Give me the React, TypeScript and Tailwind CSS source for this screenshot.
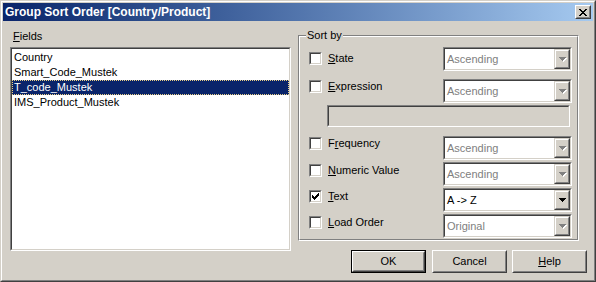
import type { ReactNode } from "react";

const fields = ["Country", "Smart_Code_Mustek", "T_code_Mustek", "IMS_Product_Mustek"];

const Sunken = ({
  className = "",
  inner = "",
  children,
}: {
  className?: string;
  inner?: string;
  children?: ReactNode;
}) => (
  <div className={`border border-t-[#808080] border-l-[#808080] border-b-white border-r-white ${className}`}>
    <div
      className={`h-full w-full border border-t-[#404040] border-l-[#404040] border-b-[#d4d0c8] border-r-[#d4d0c8] ${inner}`}
    >
      {children}
    </div>
  </div>
);

const Raised = ({
  className = "",
  inner = "",
  children,
}: {
  className?: string;
  inner?: string;
  children?: ReactNode;
}) => (
  <div className={`border border-t-[#d4d0c8] border-l-[#d4d0c8] border-b-[#404040] border-r-[#404040] ${className}`}>
    <div
      className={`h-full w-full border border-t-white border-l-white border-b-[#808080] border-r-[#808080] bg-[#d4d0c8] ${inner}`}
    >
      {children}
    </div>
  </div>
);

const Check = ({ checked = false }: { checked?: boolean }) => (
  <Sunken className="w-[13px] h-[13px] shrink-0" inner="bg-white">
    {checked && (
      <svg width="9" height="9" viewBox="0 0 9 9" shapeRendering="crispEdges" className="block">
        <g fill="#000">
          <rect x="1" y="3" width="1" height="3" />
          <rect x="2" y="4" width="1" height="3" />
          <rect x="3" y="5" width="1" height="3" />
          <rect x="4" y="4" width="1" height="3" />
          <rect x="5" y="3" width="1" height="3" />
          <rect x="6" y="2" width="1" height="3" />
          <rect x="7" y="1" width="1" height="3" />
        </g>
      </svg>
    )}
  </Sunken>
);

const Arrow = ({ enabled }: { enabled: boolean }) => (
  <svg width="8" height="5" viewBox="0 0 8 5" shapeRendering="crispEdges" className="block">
    {!enabled && (
      <g fill="#fff">
        <rect x="1" y="1" width="7" height="1" />
        <rect x="2" y="2" width="5" height="1" />
        <rect x="3" y="3" width="3" height="1" />
        <rect x="4" y="4" width="1" height="1" />
      </g>
    )}
    <g fill={enabled ? "#000" : "#808080"}>
      <rect x="0" y="0" width="7" height="1" />
      <rect x="1" y="1" width="5" height="1" />
      <rect x="2" y="2" width="3" height="1" />
      <rect x="3" y="3" width="1" height="1" />
    </g>
  </svg>
);

const Combo = ({ value, enabled = false }: { value: string; enabled?: boolean }) => (
  <Sunken className="w-[129px] h-[24px] shrink-0" inner="bg-white flex items-center">
    <span className={`flex-1 pl-[2px] ${enabled ? "text-black" : "text-[#808080]"}`}>{value}</span>
    <Raised className="w-[16px] h-full" inner="flex items-center justify-center pl-[1px]">
      <Arrow enabled={enabled} />
    </Raised>
  </Sunken>
);

const Row = ({
  label,
  value,
  off,
  checked = false,
  enabled = false,
  className = "",
}: {
  label: ReactNode;
  value: string;
  off: string;
  checked?: boolean;
  enabled?: boolean;
  className?: string;
}) => (
  <div className={`flex items-start h-[24px] ${className}`}>
    <div className={`w-[143px] pl-[9px] flex items-center gap-[6px] ${off}`}>
      <Check checked={checked} />
      <span className="leading-[13px]">{label}</span>
    </div>
    <Combo value={value} enabled={enabled} />
  </div>
);

const TitleBar = () => (
  <div className="h-[18px] shrink-0 flex items-center justify-between bg-linear-to-r from-[#0a246a] to-[#a6caf0] pl-[2px] pr-[2px]">
    <span className="font-bold text-white text-[12px] leading-[14px]">Group Sort Order [Country/Product]</span>
    <div className="border border-t-white border-l-white border-b-[#404040] border-r-[#404040] w-[16px] h-[14px]">
      <div className="h-full w-full border border-t-[#d4d0c8] border-l-[#d4d0c8] border-b-[#808080] border-r-[#808080] bg-[#d4d0c8] flex items-center justify-center">
        <svg width="8" height="7" viewBox="0 0 8 7" shapeRendering="crispEdges" className="block">
          <g fill="#000">
            <rect x="0" y="0" width="2" height="1" />
            <rect x="6" y="0" width="2" height="1" />
            <rect x="1" y="1" width="2" height="1" />
            <rect x="5" y="1" width="2" height="1" />
            <rect x="2" y="2" width="4" height="1" />
            <rect x="3" y="3" width="2" height="1" />
            <rect x="2" y="4" width="4" height="1" />
            <rect x="1" y="5" width="2" height="1" />
            <rect x="5" y="5" width="2" height="1" />
            <rect x="0" y="6" width="2" height="1" />
            <rect x="6" y="6" width="2" height="1" />
          </g>
        </svg>
      </div>
    </div>
  </div>
);

const Btn = ({ children, def = false, className = "" }: { children: ReactNode; def?: boolean; className?: string }) =>
  def ? (
    <div className={`w-[75px] h-[23px] border border-black ${className}`}>
      <div className="h-full w-full border border-t-white border-l-white border-b-[#404040] border-r-[#404040] bg-[#d4d0c8]">
        <div className="h-full w-full border border-t-[#d4d0c8] border-l-[#d4d0c8] border-b-[#808080] border-r-[#808080] flex items-center justify-center">
          {children}
        </div>
      </div>
    </div>
  ) : (
    <div
      className={`w-[75px] h-[23px] border border-t-white border-l-white border-b-[#404040] border-r-[#404040] ${className}`}
    >
      <div className="h-full w-full border border-t-[#d4d0c8] border-l-[#d4d0c8] border-b-[#808080] border-r-[#808080] bg-[#d4d0c8] flex items-center justify-center">
        {children}
      </div>
    </div>
  );

export default function App() {
  return (
    <div className="w-[596px] h-[282px] border border-t-[#d4d0c8] border-l-[#d4d0c8] border-b-[#404040] border-r-[#404040] bg-[#d4d0c8] font-['Liberation_Sans',Arial,sans-serif] text-[11px] leading-[13px] text-black select-none">
      <div className="h-full border border-t-white border-l-white border-b-[#808080] border-r-[#808080] p-[1px] flex flex-col">
        <TitleBar />
        <div className="flex flex-1 pl-[7px]">
          {/* fields list */}
          <div className="w-[281px] flex flex-col">
            <div className="mt-[9px] pl-[3px]">
              <u>F</u>ields
            </div>
            <Sunken className="mt-[4px] w-[281px] h-[204px]" inner="bg-white pt-[1px]">
              {fields.map((f, i) => (
                <div
                  key={f}
                  className={`h-[15px] pl-[1px] border flex items-center ${
                    i === 2
                      ? "bg-[#0a246a] text-white border-dotted border-[#e9cf86]"
                      : "border-transparent"
                  }`}
                >
                  {f}
                </div>
              ))}
            </Sunken>
          </div>

          {/* sort by + buttons */}
          <div className="ml-[7px] w-[289px] flex flex-col">
            <div className="relative mt-[14px] w-[281px] h-[206px] border border-t-[#808080] border-l-[#808080] border-b-white border-r-white">
              <span className="absolute left-[7px] top-[-7px] px-[1px] bg-[#d4d0c8]">Sort by</span>
              <div className="h-full border border-t-white border-l-white border-b-[#808080] border-r-[#808080] flex flex-col">
                <Row className="mt-[10px]" off="pt-[5px]" label={<><u>S</u>tate</>} value="Ascending" />
                <Row className="mt-[8px]" off="pt-[1px]" label={<><u>E</u>xpression</>} value="Ascending" />
                <Sunken className="mt-[2px] ml-[27px] w-[243px] h-[22px]" inner="bg-[#d4d0c8]" />
                <Row className="mt-[9px]" off="pt-[1px]" label={<>F<u>r</u>equency</>} value="Ascending" />
                <Row className="mt-[2px]" off="pt-[2px]" label={<><u>N</u>umeric Value</>} value="Ascending" />
                <Row className="mt-[2px]" off="pt-[2px]" checked enabled label={<><u>T</u>ext</>} value="A -> Z" />
                <Row className="mt-[2px]" off="pt-[2px]" label={<><u>L</u>oad Order</>} value="Original" />
              </div>
            </div>
            <div className="mt-[9px] flex justify-end">
              <Btn def>OK</Btn>
              <Btn className="ml-[6px]">Cancel</Btn>
              <Btn className="ml-[5px]">
                <span>
                  <u>H</u>elp
                </span>
              </Btn>
            </div>
          </div>
        </div>
      </div>
    </div>
  );
}
